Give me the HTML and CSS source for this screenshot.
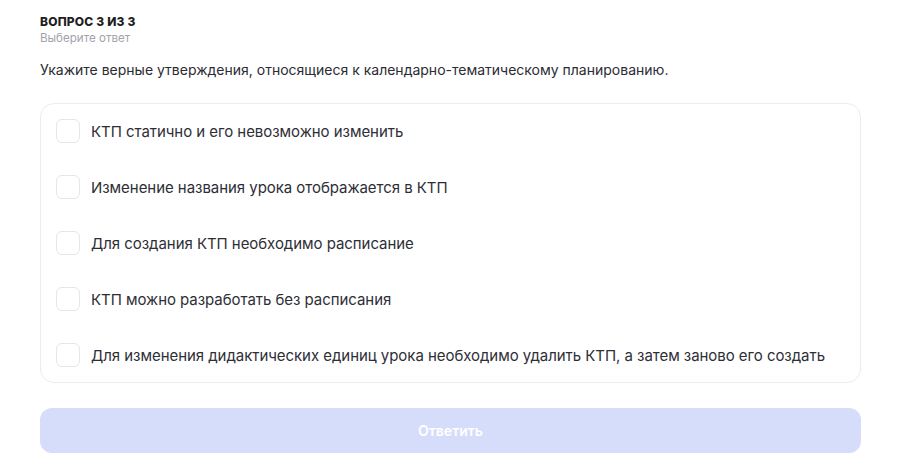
FILE: index.html
```html
<!DOCTYPE html>
<html lang="ru">
<head>
<meta charset="utf-8">
<link rel="stylesheet" href="styles.css">
</head>
<body>
<main class="quiz">
  <header class="head">
    <div class="counter">ВОПРОС 3 ИЗ 3</div>
    <div class="hint">Выберите ответ</div>
  </header>
  <p class="question">Укажите верные утверждения, относящиеся к календарно-тематическому планированию.</p>
  <div class="card">
    <label class="option"><span class="box"></span><span class="label">КТП статично и его невозможно изменить</span></label>
    <label class="option"><span class="box"></span><span class="label">Изменение названия урока отображается в КТП</span></label>
    <label class="option"><span class="box"></span><span class="label">Для создания КТП необходимо расписание</span></label>
    <label class="option"><span class="box"></span><span class="label">КТП можно разработать без расписания</span></label>
    <label class="option"><span class="box"></span><span class="label">Для изменения дидактических единиц урока необходимо удалить КТП, а затем заново его создать</span></label>
  </div>
  <button class="submit" type="button">Ответить</button>
</main>
</body>
</html>
```

FILE: styles.css
```css
* { box-sizing: border-box; }
html, body { margin: 0; padding: 0; background: #fff; }
body {
  font-family: Inter, "Noto Sans", sans-serif;
  color: #2b2b33;
}
.quiz {
  width: 821px;
  margin-left: 40px;
  padding-top: 14px;
}
.head { display: flex; flex-direction: column; gap: 2px; }
.counter {
  font-size: 12px;
  font-weight: 800;
  letter-spacing: 0.2px;
  line-height: 15px;
  color: #1d1d22;
}
.hint {
  font-size: 11.6px;
  line-height: 14px;
  color: #a3a3ab;
}
.question {
  margin: 15px 0 0;
  font-size: 14px;
  line-height: 20px;
  color: #2b2b33;
}
.card {
  margin-top: 23px;
  border: 1px solid #ececf0;
  border-radius: 14px;
  padding: 15px 15px;
  display: flex;
  flex-direction: column;
  gap: 32px;
}
.option {
  display: flex;
  align-items: center;
  gap: 11px;
  height: 24px;
}
.box {
  width: 24px;
  height: 24px;
  border: 1.5px solid #e6e6ea;
  border-radius: 6px;
  flex: none;
}
.label {
  font-size: 15px;
  letter-spacing: -0.05px;
  color: #2e2e36;
}
.submit {
  margin-top: 25px;
  width: 100%;
  height: 45px;
  border: none;
  border-radius: 12px;
  background: #d6ddfb;
  color: #fff;
  font-family: Inter, "Noto Sans", sans-serif;
  font-size: 14px;
  font-weight: 600;
}
```
